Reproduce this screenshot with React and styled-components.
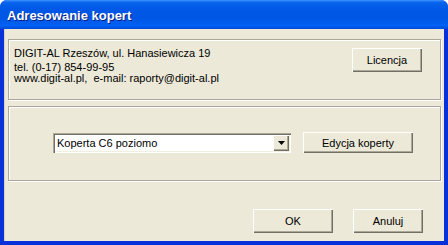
import React from "react";
import styled, { createGlobalStyle } from "styled-components";

const GlobalStyles = createGlobalStyle`
  html, body {
    margin: 0;
    padding: 0;
    background: #ffffff;
  }
  body {
    font-family: "Liberation Sans", Arial, sans-serif;
    font-size: 11px;
    color: #000;
  }
`;

function App() {
  return (
    <>
      <GlobalStyles />
      <Window>
        <TitleBar>
          <Title>Adresowanie kopert</Title>
        </TitleBar>
        <Body>
          <Group height={61}>
            <InfoRow>
              <InfoText>
                <Line>DIGIT-AL Rzeszów, ul. Hanasiewicza 19</Line>
                <Line gap={3}>tel. (0-17) 854-99-95</Line>
                <Line>www.digit-al.pl,&nbsp; e-mail: raporty@digit-al.pl</Line>
              </InfoText>
              <Button width={70}>Licencja</Button>
            </InfoRow>
          </Group>
          <Group height={75}>
            <EnvelopeRow>
              <Combo>
                <ComboValue>Koperta C6 poziomo</ComboValue>
                <ComboArrow>
                  <svg width="7" height="4" viewBox="0 0 7 4">
                    <path d="M0 0h7L3.5 4z" fill="#000" />
                  </svg>
                </ComboArrow>
              </Combo>
              <Button width={110} height={21}>Edycja koperty</Button>
            </EnvelopeRow>
          </Group>
          <Footer>
            <Button width={80}>OK</Button>
            <Button width={70}>Anuluj</Button>
          </Footer>
        </Body>
      </Window>
    </>
  );
}

export default App;

const Window = styled.div`
  width: 448px;
  height: 245px;
  display: flex;
  flex-direction: column;
  background: #0831d9;
  border-radius: 7px 7px 0 0;
  overflow: hidden;
`;

const TitleBar = styled.div`
  height: 29px;
  display: flex;
  align-items: center;
  padding: 0 7px;
  background: linear-gradient(
    180deg,
    #3d95ff 0%,
    #0a64ec 8%,
    #0058e6 30%,
    #0055e5 60%,
    #0061f2 88%,
    #0049d8 100%
  );
`;

const Title = styled.div`
  font-family: "Liberation Sans", Arial, sans-serif;
  font-weight: bold;
  font-size: 13px;
  color: #fff;
  text-shadow: 1px 1px 0 #0a1f80;
  margin-top: 2px;
`;

const Body = styled.div`
  flex: 1;
  display: flex;
  flex-direction: column;
  margin: 0 4px 4px 4px;
  background: #ece9d8;
  padding: 10px 3px 0 3px;
  border-left: 1px solid #d5d2c5;
`;

const Group = styled.div`
  height: ${(p) => p.height}px;
  box-sizing: border-box;
  border: 1px solid #aca899;
  box-shadow: inset 1px 1px 0 #fff, 1px 1px 0 #fff;
  margin-bottom: 6px;
`;

const InfoRow = styled.div`
  display: flex;
  justify-content: space-between;
  align-items: flex-start;
  padding: 8px 18px 0 5px;
`;

const InfoText = styled.div`
  display: flex;
  flex-direction: column;
`;

const Line = styled.div`
  font-size: 11px;
  line-height: 11px;
  margin-top: ${(p) => p.gap || 0}px;
`;

const Button = styled.button`
  width: ${(p) => p.width}px;
  height: ${(p) => p.height || 24}px;
  font-family: "Liberation Sans", Arial, sans-serif;
  font-size: 11px;
  color: #000;
  background: #ece9d8;
  border: none;
  padding: 0;
  box-shadow: inset 1px 1px 0 #fff, inset -1px -1px 0 #716f64,
    inset -2px -2px 0 #aca899;
`;

const EnvelopeRow = styled.div`
  display: flex;
  align-items: center;
  gap: 12px;
  padding: 25px 0 0 44px;
`;

const Combo = styled.div`
  width: 238px;
  height: 20px;
  box-sizing: border-box;
  display: flex;
  align-items: center;
  background: #fff;
  box-shadow: inset 1px 1px 0 #aca899, inset 2px 2px 0 #716f64,
    inset -1px -1px 0 #fff, inset -2px -2px 0 #f1efe2;
  padding: 2px;
`;

const ComboValue = styled.div`
  flex: 1;
  padding-left: 2px;
`;

const ComboArrow = styled.div`
  width: 16px;
  height: 16px;
  display: flex;
  align-items: center;
  justify-content: center;
  background: #ece9d8;
  box-shadow: inset 1px 1px 0 #fff, inset -1px -1px 0 #716f64,
    inset -2px -2px 0 #aca899;
`;

const Footer = styled.div`
  display: flex;
  justify-content: flex-end;
  gap: 20px;
  padding: 22px 18px 0 0;
`;
